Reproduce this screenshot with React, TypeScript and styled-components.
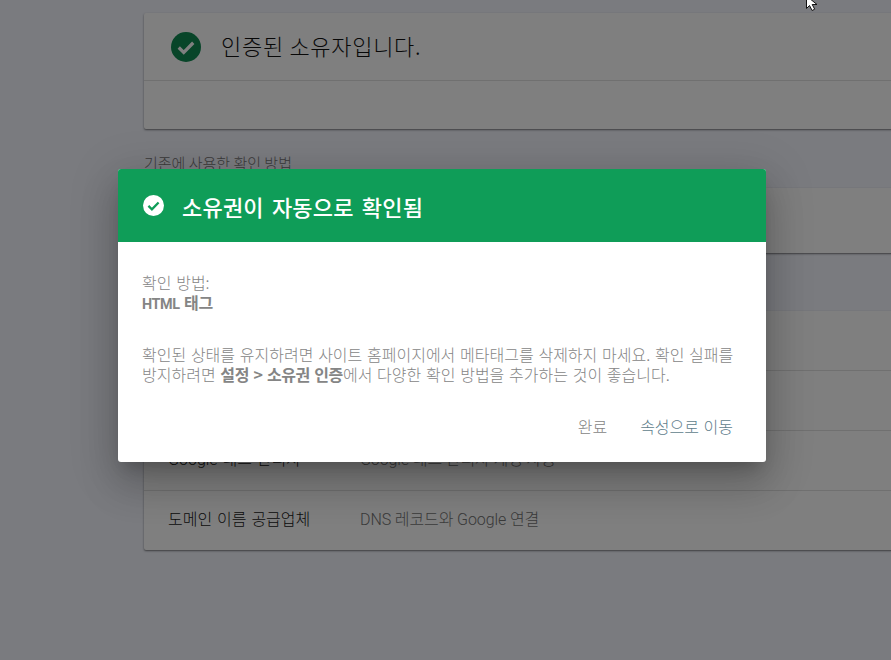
import React from "react";
import styled, { createGlobalStyle } from "styled-components";

const Global = createGlobalStyle`
  html, body { margin: 0; padding: 0; width: 891px; height: 660px; overflow: hidden; }
  body { background: #f4f6fe; font-family: "Noto Sans CJK KR", Roboto, sans-serif; font-weight: 300; }
`;

const Page = styled.div`
  position: relative;
  width: 891px;
  height: 660px;
  overflow: hidden;
  padding: 13px 0 0 144px;
  box-sizing: border-box;
`;

const Latin = styled.span`
  font-family: Roboto, sans-serif;
  font-size: 0.9em;
`;

const Card = styled.section`
  width: 760px;
  background: #fff;
  border-radius: 2px 0 0 2px;
  box-shadow: 0 1px 2px rgba(0, 0, 0, 0.5);
`;

const StatusRow = styled.div`
  height: 67px;
  display: flex;
  align-items: center;
  gap: 20px;
  padding-left: 27px;
  border-bottom: 1px solid #e0e0e0;
`;

const StatusText = styled.h1`
  margin: -4px 0 0;
  font-size: 22px;
  line-height: 30px;
  font-weight: 300;
  letter-spacing: 0.7px;
  color: #111;
`;

const StatusFoot = styled.div`
  height: 48px;
`;

const SectionLabel = styled.h2`
  margin: 24px 0 15px;
  height: 20px;
  line-height: 20px;
  font-size: 15px;
  font-weight: 300;
  color: #757575;
`;

const SingleCard = styled(Card)`
  height: 65px;
  margin-bottom: 58px;
`;

const Row = styled.div`
  height: 59px;
  display: flex;
  align-items: center;
  padding: 0 0 2px 24px;
  box-sizing: border-box;
  font-family: Roboto, "Noto Sans CJK KR", sans-serif;
  font-size: 16px;
  line-height: 20px;
  & + & { border-top: 1px solid #e0e0e0; height: 60px; }
`;

const RowName = styled.span`
  width: 192px;
  word-spacing: 1px;
  color: #212121;
`;

const RowDesc = styled.span`
  letter-spacing: -0.1px;
  color: #757575;
`;

const Scrim = styled.div`
  position: absolute;
  inset: 0;
  background: rgba(0, 0, 0, 0.5);
`;

const Modal = styled.div`
  position: absolute;
  left: 118px;
  top: 169px;
  width: 648px;
  height: 293px;
  border-radius: 3px;
  background: #fff;
  overflow: hidden;
  box-shadow: 0 11px 15px -7px rgba(0,0,0,.2), 0 24px 38px 3px rgba(0,0,0,.14), 0 9px 46px 8px rgba(0,0,0,.12);
  display: flex;
  flex-direction: column;
`;

const ModalHeader = styled.header`
  height: 73px;
  background: #0f9d58;
  display: flex;
  align-items: center;
  gap: 18px;
  padding-left: 25px;
  color: #fff;
`;

const ModalTitle = styled.h2`
  margin: 0;
  font-size: 22px;
  line-height: 30px;
  font-weight: 500;
  letter-spacing: 0.2px;
  word-spacing: 3px;
  color: #fff;
`;

const ModalBody = styled.div`
  flex: 1;
  padding: 30px 24px 0;
  font-size: 16px;
  line-height: 20px;
  word-spacing: 1.2px;
  color: #858585;
  white-space: nowrap;
  strong { font-weight: 700; letter-spacing: -0.4px; }
`;

const Method = styled.div`
  margin-bottom: 29px;
`;

const Actions = styled.div`
  display: flex;
  justify-content: flex-end;
  gap: 33px;
  padding: 0 33px 26px 0;
`;

const ActionButton = styled.button<{ $primary?: boolean }>`
  border: 0;
  padding: 0;
  background: none;
  font: inherit;
  font-size: 16px;
  line-height: 20px;
  word-spacing: 1px;
  color: ${(p) => (p.$primary ? "#607d8b" : "#858585")};
`;

const Cursor = styled.svg`
  position: absolute;
  left: 805px;
  top: -5px;
`;

const CheckBadge = ({ size, circle, tick }: { size: number; circle: string; tick: string }) => (
  <svg width={size} height={size} viewBox="0 0 24 24" aria-hidden="true">
    <circle cx="12" cy="12" r="12" fill={circle} />
    <path d="M6.2 12.4l4 4 7.6-7.8" fill="none" stroke={tick} strokeWidth="2.6" />
  </svg>
);

export default function App() {
  return (
    <Page>
      <Global />
      <Card>
        <StatusRow>
          <CheckBadge size={30} circle="#108a52" tick="#fff" />
          <StatusText>인증된 소유자입니다.</StatusText>
        </StatusRow>
        <StatusFoot />
      </Card>
      <SectionLabel>기존에 사용한 확인 방법</SectionLabel>
      <SingleCard />
      <Card>
        <Row />
        <Row />
        <Row>
          <RowName>Google 태그 관리자</RowName>
          <RowDesc>Google 태그 관리자 계정 사용</RowDesc>
        </Row>
        <Row>
          <RowName>도메인 이름 공급업체</RowName>
          <RowDesc>DNS 레코드와 Google 연결</RowDesc>
        </Row>
      </Card>
      <Scrim />
      <Modal>
        <ModalHeader>
          <CheckBadge size={21} circle="#fff" tick="#0f9d58" />
          <ModalTitle>소유권이 자동으로 확인됨</ModalTitle>
        </ModalHeader>
        <ModalBody>
          <Method>
            확인 방법:
            <br />
            <strong><Latin>HTML</Latin> 태그</strong>
          </Method>
          확인된 상태를 유지하려면 사이트 홈페이지에서 메타태그를 삭제하지 마세요. 확인 실패를
          <br />
          방지하려면 <strong>설정 &gt; 소유권 인증</strong>에서 다양한 확인 방법을 추가하는 것이 좋습니다.
        </ModalBody>
        <Actions>
          <ActionButton>완료</ActionButton>
          <ActionButton $primary>속성으로 이동</ActionButton>
        </Actions>
      </Modal>
      <Cursor width="15" height="18" viewBox="0 0 15 18" aria-hidden="true">
        <path d="M1.5 1v12.5l3-3 2.6 5 2.6-1.3-2.5-4.7H12z" fill="#fff" stroke="#111" strokeWidth="1" />
      </Cursor>
    </Page>
  );
}
